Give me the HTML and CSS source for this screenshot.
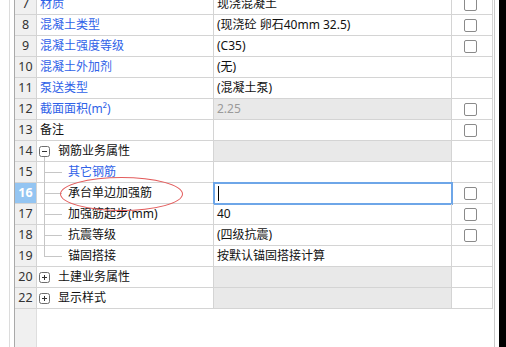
FILE: index.html
```html
<!DOCTYPE html>
<html lang="zh-CN">
<head>
<meta charset="utf-8">
<title>属性编辑</title>
<link rel="stylesheet" href="styles.css">
</head>
<body>
<div class="panel">
  <div class="frame">
    <div class="grid">
      <div class="c num">7</div><div class="c name blue">材质</div><div class="c val">现浇混凝土</div><div class="c chk"><span class="cb"></span></div>
      <div class="c num">8</div><div class="c name blue">混凝土类型</div><div class="c val">(现浇砼 卵石40mm 32.5)</div><div class="c chk"><span class="cb"></span></div>
      <div class="c num">9</div><div class="c name blue">混凝土强度等级</div><div class="c val">(C35)</div><div class="c chk"><span class="cb"></span></div>
      <div class="c num">10</div><div class="c name blue">混凝土外加剂</div><div class="c val">(无)</div><div class="c chk"></div>
      <div class="c num">11</div><div class="c name blue">泵送类型</div><div class="c val">(混凝土泵)</div><div class="c chk"></div>
      <div class="c num">12</div><div class="c name blue">截面面积(m²)</div><div class="c val ro">2.25</div><div class="c chk"><span class="cb"></span></div>
      <div class="c num">13</div><div class="c name">备注</div><div class="c val"></div><div class="c chk"><span class="cb"></span></div>
      <div class="c num">14</div><div class="c name group open"><svg class="tog" width="11" height="11" viewBox="0 0 11 11"><rect x="0.5" y="0.5" width="10" height="10" rx="2" fill="#fff" stroke="#6e6e6e"/><line x1="3" y1="5.5" x2="8" y2="5.5" stroke="#333"/></svg><span>钢筋业务属性</span></div><div class="c val ro"></div><div class="c chk"></div>
      <div class="c num">15</div><div class="c name child blue">其它钢筋</div><div class="c val"></div><div class="c chk"></div>
      <div class="c num sel">16</div><div class="c name child">承台单边加强筋<span class="mark"></span></div><div class="c val edit"><span class="caret"></span></div><div class="c chk"><span class="cb"></span></div>
      <div class="c num">17</div><div class="c name child">加强筋起步(mm)</div><div class="c val">40</div><div class="c chk"><span class="cb"></span></div>
      <div class="c num">18</div><div class="c name child">抗震等级</div><div class="c val">(四级抗震)</div><div class="c chk"><span class="cb"></span></div>
      <div class="c num">19</div><div class="c name child last">锚固搭接</div><div class="c val">按默认锚固搭接计算</div><div class="c chk"></div>
      <div class="c num">20</div><div class="c name group"><svg class="tog" width="11" height="11" viewBox="0 0 11 11"><rect x="0.5" y="0.5" width="10" height="10" rx="2" fill="#fff" stroke="#6e6e6e"/><line x1="3" y1="5.5" x2="8" y2="5.5" stroke="#333"/><line x1="5.5" y1="3" x2="5.5" y2="8" stroke="#333"/></svg><span>土建业务属性</span></div><div class="c val ro"></div><div class="c chk"></div>
      <div class="c num">22</div><div class="c name group"><svg class="tog" width="11" height="11" viewBox="0 0 11 11"><rect x="0.5" y="0.5" width="10" height="10" rx="2" fill="#fff" stroke="#6e6e6e"/><line x1="3" y1="5.5" x2="8" y2="5.5" stroke="#333"/><line x1="5.5" y1="3" x2="5.5" y2="8" stroke="#333"/></svg><span>显示样式</span></div><div class="c val ro"></div><div class="c chk"></div>
    </div>
  </div>
  <div class="gap"></div>
  <div class="edge"></div>
</div>
</body>
</html>
```

FILE: styles.css
```css
html, body {
  margin: 0;
  padding: 0;
  background: #fff;
}

body {
  width: 506px;
  height: 347px;
  overflow: hidden;
  font-family: "Noto Sans", "Noto Sans CJK SC", sans-serif;
  font-size: 12px;
  color: #111;
}

.panel {
  display: flex;
  height: 347px;
  margin-left: 9px;
  border-left: 1px solid #dcdcdc;
  padding-left: 4px;
}

.frame {
  width: 479px;
  flex: none;
  border-left: 1px solid #a9a9a9;
  border-right: 1px solid #c9c9c9;
  overflow: hidden;
  background: linear-gradient(to right, #f0f0f0 0 21px, #dedede 21px 22px, #fff 22px);
}

.gap {
  width: 4px;
  flex: none;
}

.edge {
  flex: 1;
  background: #000;
}

.grid {
  display: grid;
  grid-template-columns: 22px 177px 238px 41px;
  grid-auto-rows: 21px;
  margin-top: -6px;
  background: #fff;
}

.c {
  box-sizing: border-box;
  border-right: 1px solid #d4d4d4;
  border-bottom: 1px solid #d4d4d4;
  display: flex;
  align-items: center;
  white-space: nowrap;
  line-height: 20px;
}

.num {
  justify-content: center;
  background: #f0f0f0;
  color: #333;
  font-size: 12.5px;
}

.num.sel {
  background: #94c5f2;
  color: #fff;
  font-weight: bold;
}

.name {
  padding-left: 3px;
  position: relative;
}

.blue {
  color: #2f62e8;
}

.val {
  padding-left: 3px;
  position: relative;
}

.val.ro {
  background: #e9e9e9;
  color: #9a9a9a;
}

.val.edit {
  outline: 2px solid #6ea6e8;
  outline-offset: -1px;
}

.caret {
  display: block;
  width: 1px;
  height: 15px;
  background: #000;
  margin-left: 1px;
}

.chk {
  padding-left: 12px;
}

.cb {
  display: block;
  width: 13px;
  height: 13px;
  box-sizing: border-box;
  border: 1px solid #8a8a8a;
  border-radius: 2px;
  background: #fff;
}

.group {
  padding-left: 2px;
}

.group .tog {
  flex: none;
  margin-right: 8px;
}

.group.open::after {
  content: "";
  position: absolute;
  left: 7px;
  top: 16px;
  bottom: -1px;
  width: 1px;
  background: #c6c6c6;
}

.child {
  padding-left: 31px;
}

.child::before {
  content: "";
  position: absolute;
  left: 7px;
  top: 0;
  bottom: -1px;
  width: 1px;
  background: #c6c6c6;
}

.child.last::before {
  bottom: 50%;
}

.child::after {
  content: "";
  position: absolute;
  left: 7px;
  top: 10px;
  width: 18px;
  height: 1px;
  background: #c6c6c6;
}

.mark {
  position: absolute;
  left: 23px;
  top: -6px;
  width: 123px;
  height: 34px;
  box-sizing: border-box;
  border: 1px solid #e35d5d;
  border-radius: 50%;
  z-index: 2;
}
```
